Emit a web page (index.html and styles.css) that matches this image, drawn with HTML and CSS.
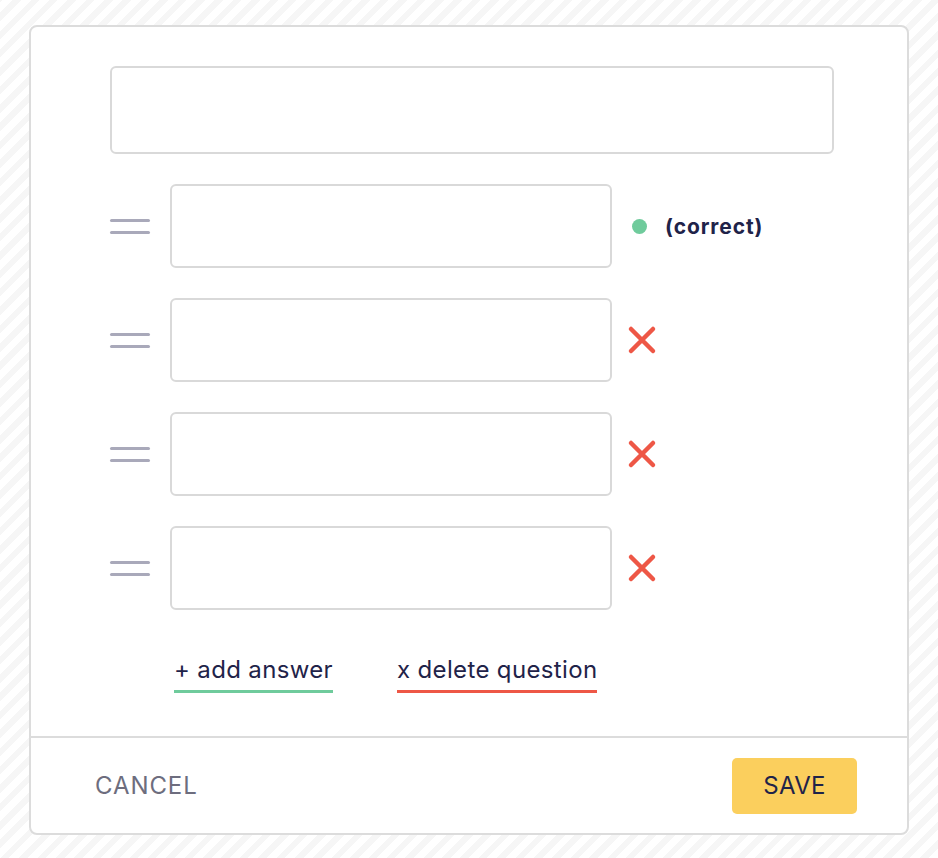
FILE: index.html
```html
<!DOCTYPE html>
<html>
<head>
<meta charset="utf-8">
<link rel="stylesheet" href="styles.css">
</head>
<body>
<div class="card">
  <div class="card-body">
    <div class="question-input"></div>
    <div class="answers">
      <div class="answer-row">
        <div class="handle"><span></span><span></span></div>
        <div class="answer-input"></div>
        <div class="status correct"><span class="dot"></span><span class="label">(correct)</span></div>
      </div>
      <div class="answer-row">
        <div class="handle"><span></span><span></span></div>
        <div class="answer-input"></div>
        <div class="status">
          <svg class="remove" width="30" height="30" viewBox="0 0 30 30"><path d="M4 4 L26 26 M26 4 L4 26" stroke="#ee5746" stroke-width="4.5" stroke-linecap="round" fill="none"/></svg>
        </div>
      </div>
      <div class="answer-row">
        <div class="handle"><span></span><span></span></div>
        <div class="answer-input"></div>
        <div class="status">
          <svg class="remove" width="30" height="30" viewBox="0 0 30 30"><path d="M4 4 L26 26 M26 4 L4 26" stroke="#ee5746" stroke-width="4.5" stroke-linecap="round" fill="none"/></svg>
        </div>
      </div>
      <div class="answer-row">
        <div class="handle"><span></span><span></span></div>
        <div class="answer-input"></div>
        <div class="status">
          <svg class="remove" width="30" height="30" viewBox="0 0 30 30"><path d="M4 4 L26 26 M26 4 L4 26" stroke="#ee5746" stroke-width="4.5" stroke-linecap="round" fill="none"/></svg>
        </div>
      </div>
    </div>
    <div class="links">
      <a class="link add">+ add answer</a>
      <a class="link delete">x delete question</a>
    </div>
  </div>
  <div class="card-footer">
    <span class="cancel">CANCEL</span>
    <span class="save">SAVE</span>
  </div>
</div>
</body>
</html>
```
FILE: styles.css
```css
html, body {
  margin: 0;
  padding: 0;
}
body {
  width: 938px;
  height: 858px;
  overflow: hidden;
  font-family: "Inter", "Lato", sans-serif;
  color: #1f2349;
  background-color: #ffffff;
  background-image: repeating-linear-gradient(-45deg, #ffffff 0 7px, #f6f6f6 7px 13px);
  padding-top: 25px;
  padding-left: 29px;
  box-sizing: border-box;
}
.card {
  width: 880px;
  height: 810px;
  box-sizing: border-box;
  background: #ffffff;
  border: 2px solid #dcdcdc;
  border-radius: 8px;
  display: flex;
  flex-direction: column;
}
.card-body {
  padding: 39px 0 0 79px;
  height: 711px;
  flex: none;
  box-sizing: border-box;
  border-bottom: 2px solid #dcdcdc;
}
.question-input {
  width: 724px;
  height: 88px;
  box-sizing: border-box;
  border: 2px solid #d9d9d9;
  border-radius: 6px;
}
.answers {
  margin-top: 30px;
  display: flex;
  flex-direction: column;
  gap: 30px;
}
.answer-row {
  display: flex;
  align-items: center;
  height: 84px;
}
.handle {
  width: 40px;
  display: flex;
  flex-direction: column;
  gap: 9px;
  margin-right: 20px;
}
.handle span {
  display: block;
  height: 3px;
  border-radius: 2px;
  background: #a9a9ba;
}
.answer-input {
  width: 442px;
  height: 84px;
  box-sizing: border-box;
  border: 2px solid #d9d9d9;
  border-radius: 6px;
}
.status {
  margin-left: 15px;
  display: flex;
  align-items: center;
}
.remove {
  display: block;
}
.dot {
  width: 15px;
  height: 15px;
  border-radius: 50%;
  background: #6fcb9c;
  margin-left: 5px;
  margin-right: 18px;
}
.label {
  font-weight: 700;
  font-size: 21px;
  letter-spacing: 0.9px;
  color: #1f2349;
}
.links {
  display: flex;
  gap: 64px;
  margin-top: 46px;
  margin-left: 64px;
}
.link {
  font-size: 24px;
  line-height: 28px;
  letter-spacing: 0.35px;
  padding-bottom: 6px;
  border-bottom: 3px solid;
  color: #1f2349;
}
.link.add {
  border-bottom-color: #6fcb9c;
}
.link.delete {
  border-bottom-color: #ee5746;
}
.card-footer {
  flex: 1;
  display: flex;
  align-items: center;
  justify-content: space-between;
  padding: 0 50px 0 64px;
}
.cancel {
  font-size: 24px;
  color: #6d6d7e;
  letter-spacing: 0.9px;
}
.save {
  width: 125px;
  height: 56px;
  box-sizing: border-box;
  background: #fbcf5d;
  border-radius: 5px;
  display: flex;
  align-items: center;
  justify-content: center;
  font-size: 24px;
  color: #1f2349;
  letter-spacing: 0.3px;
}
```
